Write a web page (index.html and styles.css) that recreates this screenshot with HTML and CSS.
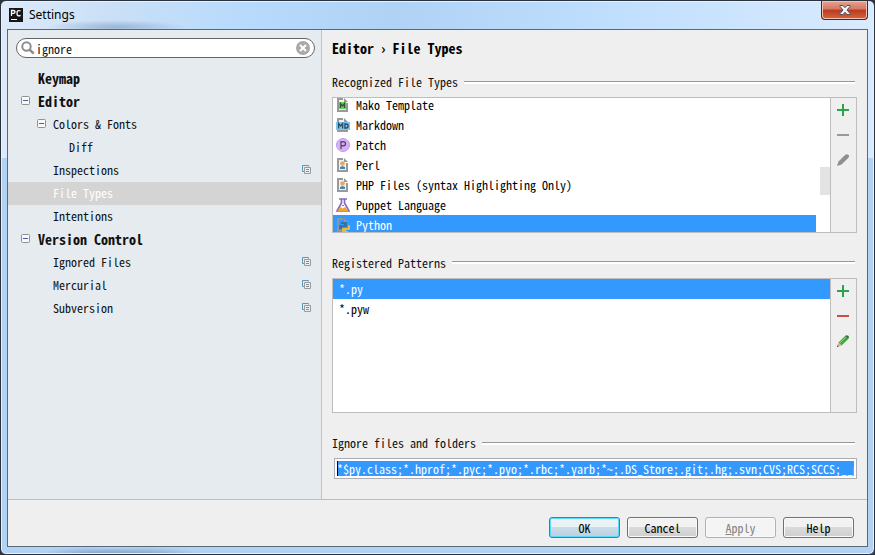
FILE: index.html
```html
<!DOCTYPE html>
<html lang="en">
<head>
<meta charset="utf-8">
<title>Settings</title>
<link rel="stylesheet" href="styles.css">
</head>
<body>
<svg class="defs" aria-hidden="true">
  <symbol id="copy" viewBox="0 0 10 10"><path d="M2.500 6.500H.5V.5h6v1" fill="none" stroke="#5a97b8"/><path d="M2.500 2.500h6v6h-6z" fill="#eceff1" stroke="#9a9a9a"/><path d="M4 4.500h3M4 6.500h3" stroke="#8a8a8a"/></symbol>
  <symbol id="minusbox" viewBox="0 0 9 9"><rect x=".5" y=".5" width="8" height="8" rx="1" fill="#f8f8f8" stroke="#919191"/><path d="M2 4.500h5" stroke="#4360a8"/></symbol>
  <symbol id="page" viewBox="0 0 14 14"><path d="M2 1h6v4h4v8H2z" fill="#f2f2f2"/><path d="M7 1H2v12h9V5" fill="none" stroke="#999" stroke-width="2"/><path d="M8 0l4 4H8z" fill="#999"/></symbol>
  <symbol id="plus" viewBox="0 0 12 12"><path d="M6 0v12M0 6h12" stroke="#2ea24b" stroke-width="2"/></symbol>
</svg>
<div class="window">
  <header class="titlebar">
    <svg class="logo" viewBox="0 0 14 14"><rect width="14" height="14" fill="#161616"/><path d="M2.500 8V2.500h2q1.500 0 1.500 1.400T4.500 5.400h-2M11.600 3q-3.600-1.600-3.600 2.200t3.600 2.200" fill="none" stroke="#fff" stroke-width="1.300"/><path d="M2 11.500h6" stroke="#fff"/></svg>
    <h1>Settings</h1>
    <button class="close" aria-label="Close"><svg viewBox="0 0 12 10"><path d="M1 .5h3l2 2.200 2-2.200h3v1L8 5l3 3.500v1H8L6 7.300 4 9.500H1v-1L4 5 1 1.500z" fill="#f4f4f4" stroke="#4d5361"/></svg></button>
  </header>
  <div class="client">
    <div class="main">
      <aside class="sidebar">
        <div class="search">
          <svg class="glass" viewBox="0 0 14 14"><circle cx="5.500" cy="5.500" r="4.200" fill="none" stroke="#8e8e8e" stroke-width="2"/><path d="M8.700 8.700l4 4" stroke="#8e8e8e" stroke-width="2.600"/></svg>
          <input type="text" value="ignore" aria-label="Search settings">
          <button class="clear" aria-label="Clear"><svg viewBox="0 0 14 14"><circle cx="7" cy="7" r="7" fill="#a9a9a9"/><path d="M4 4l6 6M10 4l-6 6" stroke="#fff" stroke-width="2"/></svg></button>
        </div>
        <ul class="tree">
          <li class="group">Keymap</li>
          <li class="group"><svg class="toggle"><use href="#minusbox"/></svg>Editor</li>
          <li class="level1"><svg class="toggle"><use href="#minusbox"/></svg>Colors &amp; Fonts</li>
          <li class="level2">Diff</li>
          <li class="level1">Inspections<svg class="scope"><use href="#copy"/></svg></li>
          <li class="level1 current">File Types</li>
          <li class="level1">Intentions</li>
          <li class="group"><svg class="toggle"><use href="#minusbox"/></svg>Version Control</li>
          <li class="level1">Ignored Files<svg class="scope"><use href="#copy"/></svg></li>
          <li class="level1">Mercurial<svg class="scope"><use href="#copy"/></svg></li>
          <li class="level1">Subversion<svg class="scope"><use href="#copy"/></svg></li>
        </ul>
      </aside>
      <section class="content">
        <h2>Editor › File Types</h2>
        <h3>Recognized File Types</h3>
        <div class="listbox">
          <div class="view">
            <ul class="types">
              <li><svg viewBox="0 0 14 14"><use href="#page"/><path d="M3 4h7v7H3z" fill="#63d35c"/><path d="M4.500 10V5.500l2 2.500 2-2.500V10" fill="none" stroke="#2c5a2c" stroke-width="1.300"/></svg>Mako Template</li>
              <li><svg viewBox="0 0 14 14"><use href="#page"/><path d="M0 4h14v8H0z" fill="#7fc4ee"/><path d="M2.600 10.500V5.500l2 2.500 2-2.500v5M8.900 6h1.200q2 0 2 2t-2 2H8.900z" fill="none" stroke="#2b4a66" stroke-width="1.300"/></svg>Markdown</li>
              <li><svg viewBox="0 0 14 14"><circle cx="7" cy="7" r="6.500" fill="#d6b0f8" stroke="#c296ea"/><path d="M5 11V3.800h2.500q2 0 2 2t-2 2H5" fill="none" stroke="#5d4a70" stroke-width="1.400"/></svg>Patch</li>
              <li><svg viewBox="0 0 14 14"><use href="#page"/><circle cx="6.500" cy="5.500" r="2.300" fill="#eda45c"/><path d="M4 11V9l2.500-1L9 9v2z" fill="#4288b5"/></svg>Perl</li>
              <li><svg viewBox="0 0 14 14"><use href="#page"/><circle cx="6.500" cy="5.500" r="2.300" fill="#eda45c"/><path d="M4 11V9l2.500-1L9 9v2z" fill="#4288b5"/></svg>PHP Files (syntax Highlighting Only)</li>
              <li><svg viewBox="0 0 14 14"><path d="M3 1h8M5.500 1v4L1 13h12L8.500 5V1" fill="#fff" stroke="#8968c4" stroke-width="1.700"/><path d="M1.500 13l3-4 2 1.500L9 9l3.500 4z" fill="#f4a62a"/><path d="M6 7.500h2M5 5.500h1" stroke="#8968c4"/></svg>Puppet Language</li>
              <li class="selected"><svg viewBox="0 0 14 14"><path d="M7 1H2v12h4" fill="none" stroke="#8a96a4" stroke-width="2"/><path d="M8 0l4 4H8z" fill="#8a96a4"/><path d="M6 4h4q1 0 1 1v3q0 1-1 1H6v2H4q-1 0-1-1V8q0-1 1-1h4V6H5V5q0-1 1-1z" fill="#3672a4"/><path d="M12 7h1q1 0 1 1v3q0 1-1 1h-3v1h2q0 1-1 1H7q-1 0-1-1v-2q0-1 1-1h4q1 0 1-1z" fill="#e8bd33"/></svg>Python</li>
            </ul>
            <span class="thumb"></span>
          </div>
          <div class="tools">
            <button aria-label="Add type"><svg viewBox="0 0 12 12"><use href="#plus"/></svg></button>
            <button aria-label="Remove type"><svg viewBox="0 0 12 12"><path d="M0 6h12" stroke="#999" stroke-width="2"/></svg></button>
            <button aria-label="Edit type"><svg viewBox="0 0 12 12"><path d="M0 12l1.500-4.500L8.300.8Q10-.5 11.400.8T11.200 4L4.500 10.500z" fill="#8f8f8f"/></svg></button>
          </div>
        </div>
        <h3>Registered Patterns</h3>
        <div class="listbox">
          <div class="view">
            <ul class="patterns">
              <li class="selected">*.py</li>
              <li>*.pyw</li>
            </ul>
          </div>
          <div class="tools">
            <button aria-label="Add pattern"><svg viewBox="0 0 12 12"><use href="#plus"/></svg></button>
            <button aria-label="Remove pattern"><svg viewBox="0 0 12 12"><path d="M0 6h12" stroke="#c9513f" stroke-width="2"/></svg></button>
            <button aria-label="Edit pattern"><svg viewBox="0 0 12 12"><path d="M1.500 7.500L8.300.8Q10-.5 11.400.8T11.200 4L4.500 10.500z" fill="#41a548"/><path d="M3 8L9 2" stroke="#8bdc84"/><path d="M0 12l1.500-4.500 3 3z" fill="#e2ae7c"/><path d="M0 12l.6-1.800 1.200 1.200z" fill="#333"/><path d="M9.300.8l2 2" stroke="#555" stroke-width="1.300"/></svg></button>
          </div>
        </div>
        <h3><label for="ignored">Ignore files and folders</label></h3>
        <input id="ignored" class="ignored" type="text" value="*$py.class;*.hprof;*.pyc;*.pyo;*.rbc;*.yarb;*~;.DS_Store;.git;.hg;.svn;CVS;RCS;SCCS;__p">
      </section>
    </div>
    <footer class="actions">
      <button class="default">OK</button>
      <button>Cancel</button>
      <button disabled><u>A</u>pply</button>
      <button>Help</button>
    </footer>
  </div>
</div>
</body>
</html>
```
FILE: styles.css
```css
* { box-sizing: border-box; }
html, body { height: 100%; margin: 0; }
body {
  background: #2a3440;
  color: #111;
  font: 12px/20px "Noto Sans Mono CJK SC", "Liberation Mono", monospace;
}
h1, h2, h3, ul { margin: 0; padding: 0; list-style: none; }
button, input { font: inherit; color: inherit; }
button { padding: 0; border: 0; background: none; }
svg { display: block; flex: none; }
.defs { display: none; }

.window {
  display: flex;
  flex-direction: column;
  height: 100%;
  padding: 0 7px 7px;
  border: 1px solid #29323c;
  border-radius: 6px;
  box-shadow: inset 0 0 0 1px #e6f3ff;
  background:
    radial-gradient(70px 7px at 115px 26px, #6f8fbc88, transparent),
    radial-gradient(50px 7px at 90px 100%, #5f7fb088, transparent),
    radial-gradient(60px 7px at 140px 100%, #5f7fa088, transparent),
    linear-gradient(#0000 157px, #b2d2f4 157px),
    linear-gradient(90deg, #dceafa, #cbe0f6 12%, #b8dafc 28%, #b0d2f4 45%, #bcdcfd 65%, #d9ebfe);
}
.titlebar {
  display: flex;
  align-items: center;
  gap: 6px;
  flex: 0 0 28px;
  padding-left: 1px;
}
.titlebar h1 { flex: 1; font: 12px/20px "Noto Sans", sans-serif; color: #000; }
.logo { width: 14px; height: 14px; }
.close {
  display: grid;
  place-items: center;
  align-self: flex-start;
  width: 47px;
  height: 19px;
  margin-right: -1px;
  border: 1px solid #5a2020;
  border-top: 0;
  border-radius: 0 0 4px 4px;
  box-shadow: inset 0 0 0 1px #f3bfb0;
  background: linear-gradient(#e7a291, #d37762 45%, #b93a20 50%, #d4653f);
}
.close svg { width: 12px; height: 10px; }

.client {
  display: flex;
  flex-direction: column;
  flex: 1;
  min-height: 0;
  margin: 0 -1px;
  border: 1px solid #5c6875;
  background: #efefef;
}
.main { display: flex; flex: 1; min-height: 0; }
.sidebar { flex: 0 0 314px; border-right: 1px solid #bcc2c6; background: #e5ebef; }
.search {
  display: flex;
  align-items: center;
  height: 20px;
  margin: 8px 6px 9px 8px;
  padding: 0 4px;
  border: 1px solid #656565;
  border-radius: 10px;
  background: #fff;
}
.search input { flex: 1; min-width: 0; height: 18px; padding: 2px 1px 0; border: 0; background: none; outline: 0; }
.search svg { width: 14px; height: 14px; }

.tree li { display: flex; align-items: center; height: 23px; padding-bottom: 2px; }
.group { padding-left: 30px; font-size: 14px; font-weight: bold; }
.level1 { padding-left: 45px; }
.level2 { padding-left: 61px; }
.toggle { width: 9px; height: 9px; margin: 0 8px 0 -17px; }
.level1 .toggle { margin: 0 7px 0 -16px; }
.scope { width: 10px; height: 10px; margin: 0 9px 0 auto; }
.current { background: #d4d4d4; color: #fff; }

.content {
  display: flex;
  flex-direction: column;
  flex: 1;
  min-width: 0;
  padding: 8px 10px 20px;
}
h2 { margin-bottom: 14px; font-size: 14px; line-height: 20px; color: #000; }
h3 { display: flex; align-items: center; gap: 6px; margin-bottom: 5px; font: inherit; }
h3::after { content: ""; flex: 1; height: 2px; margin-right: 2px; border-top: 1px solid #989898; background: #fff; }
.listbox {
  display: flex;
  flex: 1 1 0;
  min-height: 0;
  margin-bottom: 20px;
  border: 1px solid #bdbdbd;
  background: #fff;
}
.view { position: relative; flex: 1; overflow: hidden; color: #000; }
.types { margin: -3px 14px 0 0; }
.view li { display: flex; align-items: center; gap: 6px; height: 20px; padding: 0 3px; }
.view li svg { width: 14px; height: 14px; }
.patterns li { padding-left: 6px; }
.view .selected { background: #3399ff; color: #fff; }
.thumb { position: absolute; top: 69px; right: 0; width: 10px; height: 28px; background: #e3e3e3; }
.tools {
  display: flex;
  flex-direction: column;
  align-items: center;
  gap: 13px;
  width: 26px;
  padding: 6px 2px 6px 0;
  border-left: 1px solid #bdbdbd;
  background: #efefef;
}
.tools svg { width: 12px; height: 12px; }
.ignored {
  height: 21px;
  margin-left: 2px;
  padding: 2px;
  border: 1px solid #abadb3;
  outline: 0;
  background: linear-gradient(90deg, #000 1px, #3399ff 1px) content-box;
  box-shadow: inset 0 0 0 2px #fff;
  color: #fff;
}

.actions {
  display: flex;
  justify-content: flex-end;
  gap: 7px;
  flex: 0 0 47px;
  padding: 17px 13px 0 0;
  border-top: 1px solid #bdbdbd;
}
.actions button {
  width: 71px;
  height: 21px;
  border: 1px solid #707070;
  border-radius: 3px;
  box-shadow: inset 0 0 0 1px #fafafa;
  background: linear-gradient(#f2f2f2 50%, #dadada 50%, #cfcfcf);
  color: #000;
  line-height: 19px;
}
.actions .default {
  border-color: #3c7fb1;
  box-shadow: inset 0 0 0 1px #59d8fb;
  background: linear-gradient(#eaf2f6 50%, #c9dce8 50%, #bad0dd);
}
.actions button:disabled { border-color: #adb2b5; background: #f4f4f4; color: #838383; }
```
